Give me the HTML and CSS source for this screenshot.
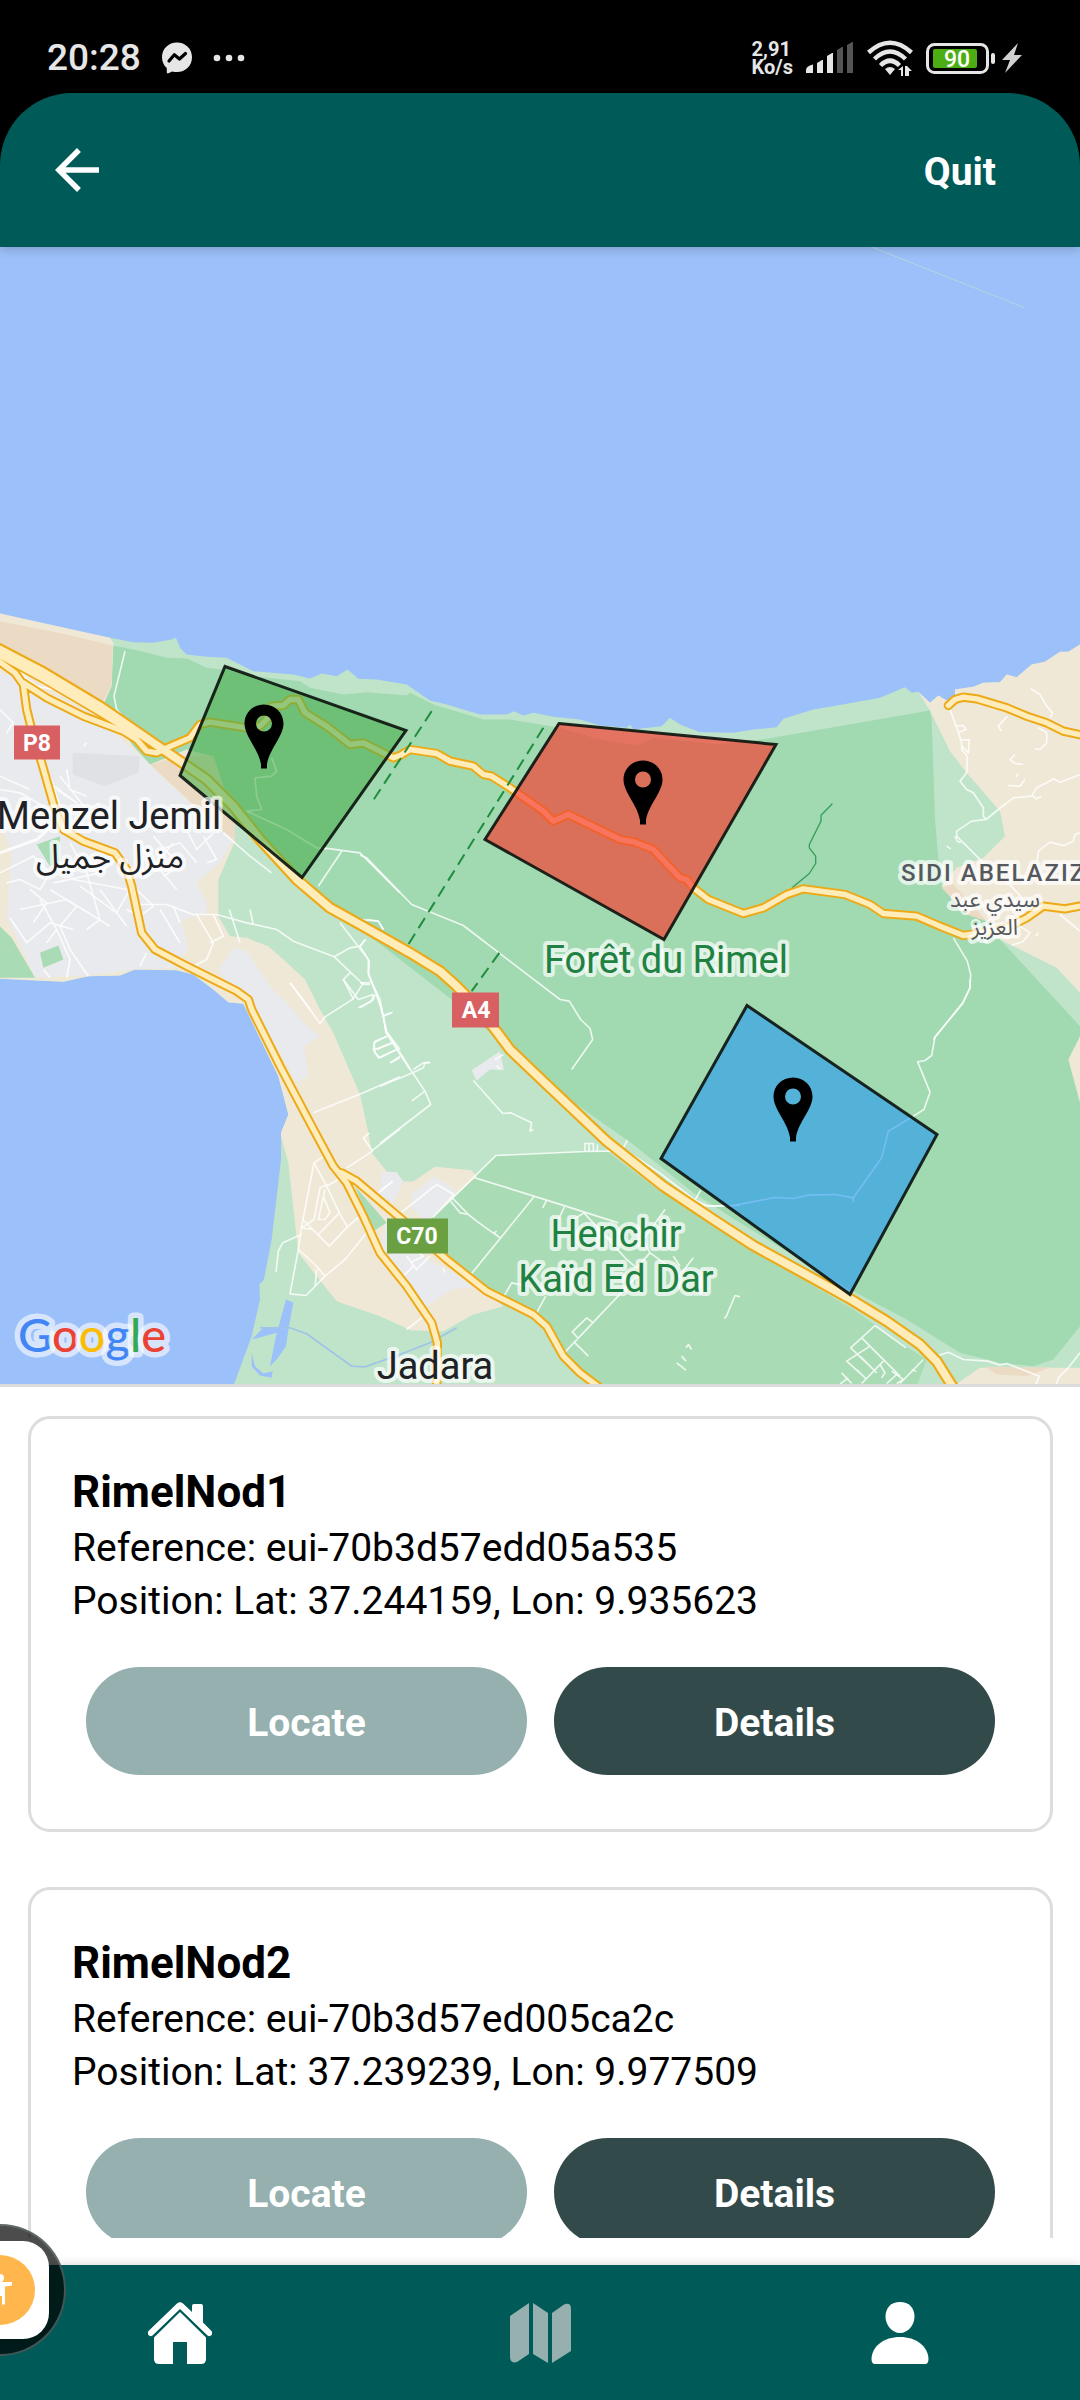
FILE: index.html
```
<!DOCTYPE html>
<html lang="en">
<head>
<meta charset="utf-8">
<meta name="viewport" content="width=device-width, initial-scale=1">
<title>Rimel nodes</title>
<link rel="stylesheet" href="styles.css">
</head>
<body>
<div class="status-bar">
  <div class="status-group">
    <span class="clock">20:28</span>
    <svg class="icon-messenger" viewBox="0 0 32 32" aria-hidden="true">
      <path fill="#e6e6e6" d="M16 0.500C7.500 0.500 1 6.700 1 15.200c0 4.400 1.800 8.200 4.800 10.900v4.200c0 1 .8 1.400 1.600 1l3.800-1.900c1.500.4 3.100.6 4.800.6 8.500 0 15-6.300 15-14.800S24.500.5 16 .5z"/>
      <path fill="none" stroke="#000" stroke-width="3.200" stroke-linejoin="round" stroke-linecap="round" d="M8 19l5.300-6.300 5.200 4.300 6-5.500"/>
    </svg>
    <svg class="icon-dots" viewBox="0 0 32 8" aria-hidden="true"><g fill="#e6e6e6"><circle cx="4" cy="4" r="3.300"/><circle cx="16" cy="4" r="3.300"/><circle cx="28" cy="4" r="3.300"/></g></svg>
  </div>
  <div class="status-group status-right">
    <span class="speed">2,91<br>Ko/s</span>
    <svg class="icon-signal" viewBox="0 0 48 32" aria-hidden="true">
      <path fill="#e6e6e6" d="M0 31v-3q0-4 7-5.500v8.500zM11 31V21l5-3h1v13zM21 31V14l5-3h1v20z"/>
      <path fill="#555" d="M31 31V8l5-3h1v26zM41 31V3l5-3h1v31z"/>
    </svg>
    <svg class="icon-wifi" viewBox="0 0 46 36" aria-hidden="true">
      <g fill="none" stroke="#e6e6e6" stroke-width="4.500">
        <path d="M1.500 12.500Q23-7 44.500 12.500"/><path d="M7.500 19Q23 4 38.500 19"/><path d="M13.500 25.500Q23 16 32.500 25.500"/>
      </g>
      <path fill="#e6e6e6" d="M18 29q5-4 10 0l-5 6zM31 30l5-4v10h-2v-6zM38 26h2l5 5h-3v5h-4z"/>
    </svg>
    <svg class="icon-battery" viewBox="0 0 96 32" aria-hidden="true">
      <rect x="1.500" y="2.500" width="60" height="28" rx="7" fill="none" stroke="#e6e6e6" stroke-width="3"/>
      <rect x="7" y="7" width="44" height="19" rx="2" fill="#4cae14"/>
      <rect x="65" y="11" width="4" height="11" rx="2" fill="#e6e6e6"/>
      <text x="31" y="25" text-anchor="middle">90</text>
      <path fill="#d0d0d0" d="M92 1L76 18h8L79 31 96 13h-8z"/>
    </svg>
  </div>
</div>

<div class="app">
  <header class="header">
    <button class="back" type="button" aria-label="Back">
      <svg viewBox="0 0 24 24" aria-hidden="true"><path fill="#fff" d="M20 11H7.830l5.590-5.590L12 4l-8 8 8 8 1.410-1.410L7.830 13H20z"/></svg>
    </button>
    <button class="quit" type="button">Quit</button>
  </header>

  <main class="content">
    <section class="map" aria-label="Map">
      <svg class="map-canvas" viewBox="0 247 1080 1138" preserveAspectRatio="xMidYMid slice">
        <defs>
          <path id="minor-roads" stroke-linecap="round" d="M1025 3520L1070 3545 1200 3655 1340 3780 1460 3875 1600 3945 1640 3980 1690 4070 1740 4120 1800 4165M-10 1980L45 2020 70 2055 80 2130 100 2210 125 2290 165 2430 190 2490 250 2525 345 2560 380 2610 395 2660 425 2800 465 2850 560 2900 640 2940 710 2975 745 3000 755 3030 840 3200 930 3370 1000 3500 1040 3550 1090 3650 1140 3760 1220 3860 1295 3970 1312 4030 1310 4165M70 2050L140 2095 250 2150 370 2195 410 2220 440 2255 470 2260 500 2245 570 2215 600 2175 630 2168 740 2185 780 2180 800 2160 815 2120 850 2118 870 2100 895 2100 915 2140 980 2180 1050 2235 1090 2230 1180 2275 1200 2268 1230 2250 1310 2262 1350 2285 1420 2300 1450 2325 1475 2330 1530 2365 1630 2435 1660 2465 1705 2445 1860 2520 1905 2528 1960 2550 2040 2635 2060 2640 2080 2665 2125 2700 2230 2742 2290 2725 2360 2685 2410 2668 2535 2685 2610 2715 2650 2742 2750 2750 2820 2780 2890 2808 3010 2790 3080 2755 3130 2720 3195 2728 3250 2718M2845 2118L2865 2100 2890 2093 2930 2098 3020 2125 3080 2150 3140 2170 3190 2195 3250 2208"/>
          <path id="highway" d="M-10 1945L130 2018 300 2120 540 2285 620 2340 700 2420 780 2520 890 2640 990 2725 1080 2775 1230 2860 1320 2915 1370 2960 1440 3030 1530 3150 1640 3255 1820 3425 1990 3560 2140 3660 2260 3738 2400 3815 2550 3898 2660 3965 2760 4035 2810 4085 2860 4165"/>
          <path id="highway-ramp" d="M-10 1962L130 2038 300 2138 420 2212"/>
          <path id="pin" fill-rule="evenodd" d="M0 0C11 0 19.500 8.500 19.500 19 19.500 32 5 45 3 60V64H-3V60C-5 45-19.500 32-19.500 19-19.500 8.500-11 0 0 0zM0 11A8 8 0 1 0 0 27 8 8 0 1 0 0 11z"/>
        </defs>

        <rect x="-1000" y="0" width="3080" height="2400" fill="#9cc0f9"/>
        <path d="M868 246L1024 308" stroke="#b4d6dd" fill="none"/>

        <!-- land, drawn on a grid three times finer than the screen -->
        <g transform="scale(.333333)">
          <path fill="#bfe4ca" d="M0 1842L110 1870 215 1895 330 1915 400 1928 460 1930 515 1920 528 1915 540 1945 560 1965 620 1972 680 1975 760 2015 880 2025 930 2037 965 2022 1010 2030 1043 2010 1075 2038 1130 2040 1220 2055 1290 2103 1340 2115 1440 2145 1520 2145 1542 2135 1570 2148 1600 2140 1660 2152 1740 2160 1800 2178 1880 2185 1890 2175 1900 2190 1985 2180 2010 2155 2040 2175 2100 2198 2200 2200 2260 2190 2330 2183 2350 2158 2440 2130 2490 2122 2640 2095 2715 2063 2735 2080 2755 2077 2790 2110 2815 2088 2840 2103 2865 2095 2865 2070 2920 2062 2950 2050 3000 2048 3020 2025 3050 2033 3095 1995 3135 1987 3180 1957 3205 1957 3240 1935V4160H700L755 4010 780 3900 778 3855 792 3840 815 3720 835 3550 843 3480 843 3400 865 3345 835 3230 730 3013 685 3008 640 2970 580 2925 530 2912 405 2910 360 2928 265 2930 190 2947 0 2938z"/>
          <path fill="#a1d9b0" d="M338 1938L400 1950 500 1975 560 1977 620 2005 680 2012 760 2030 900 2045 930 2065 1030 2085 1100 2078 1220 2088 1230 2080 1300 2115 1450 2160 1530 2160 1680 2185 1780 2215 1910 2238 1960 2215 2160 2235 2300 2218 2790 2133 2795 2160 2805 2460 2815 2580 2825 2660 2900 2730 2960 2765 3000 2820 3240 3080V3980L3160 4080 3100 4100 3000 4090 2880 4060 2720 3960 2550 3870 2220 3670 2080 3580 1900 3435 1680 3280 1355 3000 1155 2845 870 2630 790 2520 700 2460 640 2270 540 2270 450 2295 400 2240 310 2115 335 2055z"/>
          <path fill="#a9dbb5" d="M1490 3468L1820 3455 1960 3560 2220 3730 2560 3930 2700 4030 2780 4080 2750 4160H1810L1700 4070 1620 3945 1450 3870 1300 3755 1290 3660 1425 3530z"/>
          <path fill="#efe8d7" d="M0 1842L330 1915 340 1930 335 2060 310 2115 400 2240 450 2295 560 2250 640 2270 660 2330 705 2470 703 2530 655 2640 655 2750 690 2810 740 2815 805 2840 850 2880 915 2940 960 3030 1000 3100 1080 3285 1105 3400 1115 3460 1160 3515 1210 3546 1240 3546 1305 3502 1415 3512 1430 3530 1290 3660 1300 3755 1510 3920 1420 3945 1330 3995 1235 3993 1140 3950 1010 3905 950 3830 895 3760 865 3490 843 3410 843 3400 865 3345 835 3230 730 3013 685 3008 640 2970 580 2925 530 2912 405 2910 360 2928 265 2930 190 2947 0 2938z"/>
          <path fill="#efe8d7" d="M2755 2077L2790 2133 2850 2255 2900 2320 2965 2395 3000 2435 3015 2510 2950 2575 2870 2605 2825 2660 2900 2730 2960 2765 3000 2820 3080 2860 3170 2905 3240 2980V1935L3205 1957 3180 1957 3135 1987 3095 1995 3050 2033 3020 2025 3000 2048 2950 2050 2920 2062 2865 2070 2865 2095 2840 2103 2815 2088 2790 2110zM2860 4160L2940 4105H3240V4160zM3240 3110L3205 3180 3240 3310z"/>
          <path fill="#ebdbc4" d="M0 1865L200 1905 338 1938 335 2055 300 2125 0 1960zM540 2270L640 2270 660 2330 705 2470V2530L450 2295zM285 2120L325 2170 290 2160zM2825 2665L2860 2655 2960 2765 2900 2745zM2955 4102L3150 4104 3080 4130 2990 4125z"/>
          <path fill="#e8eaed" d="M0 2020L60 2035 290 2160 370 2225 450 2295 590 2430 700 2520 660 2590 590 2650 620 2710 620 2740 545 2762 565 2850 520 2905 405 2910 265 2928 105 2935 20 2750 35 2560 0 2460zM700 2845L740 2855 790 2930 810 2960 870 3020 910 3070 960 3110 912 3140 925 3230 890 3250 760 3020 680 2950 655 2910zM1235 3585L1305 3530 1370 3575 1280 3670 1235 3625zM1145 3515L1190 3518 1210 3545 1180 3610 1140 3590zM1160 3650L1280 3780 1360 3820 1420 3865 1360 3868 1280 3920 1140 3760zM1415 3212L1500 3155 1512 3212 1470 3210 1430 3243z"/>
          <path fill="#dfe1e5" d="M218 2260L420 2270 415 2320 315 2360 218 2325z"/>
          <path fill="#a9dbb5" d="M0 2780L35 2815 105 2935H0zM120 2860L175 2838 190 2880 130 2905zM110 2535L180 2510 178 2590 150 2600zM1065 3560L1160 3670 1120 3695z"/>
          <path fill="#9cc0f9" d="M858 3900L880 3910 866 3985 858 4040 830 4080 810 4100 830 4000 755 4020 790 3985 835 3985zM755 4060L765 4100 790 4122 818 4115 815 4135 780 4128 755 4100z"/>
          <path fill="none" stroke="#a0c3e8" stroke-width="5" d="M780 3985L870 3985 920 4003 1055 4100 1095 4102 1200 4065 1290 4030 1370 3985"/>
        </g>

        <g class="streets">
          <g transform="translate(0 590) scale(.333333)">
            <path d="M375 185L342 320 350 360 380 395M670 730L750 800 815 850M970 775L1080 790 1200 910M1025 785L955 890M400 945L500 945 580 975 650 975 740 1000 830 1020 880 1055 1003 1102 1050 1075 1080 1070 1098 1050M1020 1000L1105 1110 1105 1150 1145 1260M1003 1102L1090 1185 1110 1185M1100 990L1135 995 1150 1020M688 960L720 1060M750 960L760 1005M1050 1150L1030 1170 1075 1230 1120 1215M870 1180L930 1260"/>
            <path stroke-width="9" d="M0 790L110 750 150 715"/>
            <path d="M0 360L40 400 20 430M0 600L60 610 130 650 160 680M0 850L100 800 150 850 120 900 60 870 20 880M200 540L210 600 260 620M180 560L260 660 300 640M150 580L230 640 170 600M210 760L260 850 300 990 260 1020M220 870L380 900 410 930M160 880L300 850 360 800M380 830L410 900 460 950 420 980 380 960M300 900L380 1010M150 900L230 950 180 1010 210 1080 265 1160M30 985L80 1060 150 1000 220 1020M60 960L200 930 330 1010M120 930L170 1020 140 1060M240 890L350 970 400 880M90 900L140 940 100 1000M460 740L540 830 490 860M480 780L540 760 590 820M430 780L530 900M560 720L590 780 640 730M610 740L650 810 620 820M520 760L440 860M480 960L540 1060M520 950L540 1000M590 975L640 1060 620 1110 580 1130M640 975L670 1040 630 1060M440 1090L420 1130M130 1140L150 1165M170 1020L210 1110 200 1165M60 250L110 290 160 300M150 560L180 650M90 600L0 560M260 460L250 470"/>
            <path d="M815 505L830 545 815 560 765 565 770 620 785 660 740 665 860 720 950 775 980 778"/>
          </g>
          <g transform="translate(360 650) scale(.333333)">
            <path d="M0 617L20 625 155 765 310 828 600 1050 628 1055 662 1110 690 1137 698 1170 635 1260M0 810L55 815 70 840M15 870L0 890 28 935 25 975 50 1030 70 1100 78 1150 150 1260M0 1000L30 1000M0 1075L40 1050 45 1035M70 1100L95 1090M80 1160L42 1180 45 1210 60 1225 110 1200M45 1200L95 1180M120 1220L90 1240M210 1240L190 1240 160 1260"/>
          </g>
          <g transform="translate(720 620) scale(.333333)">
            <path d="M690 270L712 330 725 370 725 390 742 410 740 460 720 485 740 510 760 520 790 565 790 590 798 600 755 605 710 635 710 650 800 740M798 600L835 570 880 535 935 530 950 505 980 490 1000 478 1020 488 1080 465M710 320L730 318 738 330 712 340M725 362L748 360 745 400 725 380M932 208L960 225 980 260 998 280 990 295M862 290L835 320 845 335M955 325L980 340 980 370 960 390 945 388M885 405L870 420 885 432 910 435M895 462L888 472M915 480L900 500 865 498M935 525L948 538 965 530M1080 640L1065 645 1060 665 1030 678 990 668 955 695 950 740M680 680L692 688M705 650L712 665 722 670M860 785L920 850M1020 885L1080 935M900 920L930 940 910 965 875 978M955 940L948 950M700 955L742 1025 752 1065 750 1105 728 1150 640 1260"/>
          </g>
          <g transform="translate(0 980) scale(.333333)">
            <path d="M870 10L905 55 960 132 975 112 1060 58 1030 0M1075 85L1115 65 1120 45M1060 58L1090 10M1110 0L1140 60 1158 155 1200 210M1150 108L1178 98M1162 170L1125 185 1120 210 1135 235 1190 210M1130 210L1180 190M1172 250L1200 235M940 400L1078 345 1200 292M1108 460L1090 475 1118 515 1040 565M1118 512L1200 448M972 530L942 550 905 740 895 810 870 943 918 948 975 890 1035 840 1100 760M942 550L980 620 1018 700 1042 742 1080 710M1042 742L988 800 908 720M1018 700L955 765M980 620L1015 600M985 615L960 625 942 720 905 745M970 650L990 700 975 720 955 720 975 630M905 745L940 750M905 765L848 790 835 815 828 878M895 810L945 855 975 890M950 870L945 920M1135 640L1178 605"/>
          </g>
          <g transform="translate(380 980) scale(.333333)">
            <path d="M0 70L20 155 98 280 135 335 152 375 0 492M0 320L98 280 130 265 135 250 150 248M135 335L95 365M280 303L368 402 392 400 455 430 450 455 460 450M65 698L170 615 222 645 160 712 348 528 615 516 740 514 845 585 945 662 985 680 1080 678M615 516V492H640V516M627 492V516M652 495V516M730 505L742 482M945 662L962 632M285 595L500 662 715 730M462 652L270 888M500 662L488 685M553 683L535 720M612 700L580 720M217 655L265 705 240 700 212 665M265 705L290 725 360 775 342 760 350 755M612 700L740 840 770 865 810 820 880 870M665 745L700 740M855 690L790 780 810 820M680 770L720 800M880 830L900 860M940 835L905 880M790 870L555 1118M640 1030L620 1015 577 1057 595 1077M585 1090L625 1130M372 950L395 910 440 920M470 1000L497 950M1033 1018L1040 1008 1065 948 1080 952M935 1110L925 1095 918 1105M905 1130L918 1145M890 1150L918 1172M80 1050L125 1015M60 900L100 860M80 830L110 870 150 830M90 850L130 830 100 810M195 880L190 865M0 635L38 605M345 240L370 225M350 260L362 268"/>
          </g>
          <g transform="translate(700 980) scale(.333333)">
            <path d="M810 0V25L788 72 705 172 695 228 675 243 653 247 690 338 672 390 640 410M0 678L90 680M525 1038L618 1105M525 1038L452 1105 520 1170M485 1075L600 1190M510 1100L440 1145 490 1190M550 1145L485 1212M480 1130L530 1180M470 1170L500 1200M425 1180L455 1212M540 1155L555 1180 545 1195M575 1175L610 1200 590 1212M560 1212L590 1185M600 1212L670 1140M420 1214L445 1195M715 1128L745 1118 790 1140 865 1145 900 1157 920 1152 1018 1190 1008 1214M1140 1120L1105 1165 1075 1195 1070 1214M635 1170L648 1175"/>
            <path d="M640 410L565 455 545 535 460 655 405 645 325 647 280 657 225 654 90 680M460 655V670"/>
          </g>
        </g>

        <g transform="scale(.333333)" fill="none" stroke-linejoin="round">
          <path stroke="#34a05a" stroke-width="4" d="M2376 2665L2428 2622 2447 2592V2570L2428 2545V2535L2463 2465V2447L2497 2413"/>
          <g class="road-casing">
            <use href="#minor-roads" stroke-width="28"/>
            <use href="#highway-ramp" stroke-width="28"/>
            <use href="#highway" stroke-width="36"/>
          </g>
          <g class="road-fill">
            <use href="#minor-roads" stroke-width="16"/>
            <use href="#highway-ramp" stroke-width="18"/>
            <use href="#highway" stroke-width="23"/>
          </g>
          <path stroke="#1e8e3e" stroke-width="6" stroke-dasharray="36 20" d="M1295 2135L1118 2405M1630 2185L1225 2835M1498 2860L1415 2975"/>
        </g>

        <g class="plots">
          <path fill="#4caf50" fill-opacity=".6" d="M225 667L406 731 302 878 180 776z"/>
          <path fill="#f44336" fill-opacity=".7" d="M559 724L776 745 664 940 485 840z"/>
          <path fill="#2196f3" fill-opacity=".6" d="M747 1006L937 1135 850 1295 661 1159z"/>
        </g>

        <g class="shields">
          <rect x="14" y="726" width="46" height="34" fill="#d96062"/><text x="37" y="751">P8</text>
          <rect x="452" y="993" width="47" height="35" fill="#d96062"/><text x="476" y="1018">A4</text>
          <rect x="387" y="1219" width="61" height="35" fill="#6a9f42"/><text x="417" y="1244">C70</text>
        </g>

        <g class="labels">
          <g class="town">
            <text x="109" y="829">Menzel Jemil</text>
            <text class="arabic" x="110" y="868">منزل جميل</text>
            <text x="435" y="1379">Jadara</text>
          </g>
          <g class="forest">
            <text x="666" y="973">Forêt du Rimel</text>
            <text x="616" y="1247">Henchir</text>
            <text x="616" y="1292">Kaïd Ed Dar</text>
          </g>
          <g class="district">
            <text class="latin" x="901" y="881">SIDI ABELAZIZ</text>
            <text class="arabic-small" x="995" y="907">سيدي عبد</text>
            <text class="arabic-small" x="995" y="935">العزيز</text>
          </g>
          <text class="logo" x="18" y="1352"><tspan fill="#4285f4">G</tspan><tspan fill="#ea4335">o</tspan><tspan fill="#fbbc05">o</tspan><tspan fill="#4285f4">g</tspan><tspan fill="#34a853">l</tspan><tspan fill="#ea4335">e</tspan></text>
        </g>

        <use href="#pin" x="264" y="705"/>
        <use href="#pin" x="643" y="761"/>
        <use href="#pin" x="793" y="1078"/>
      </svg>
    </section>

    <section class="nodes" aria-label="Nodes">
      <article class="card">
        <h2>RimelNod1</h2>
        <p>Reference: eui-70b3d57edd05a535</p>
        <p>Position: Lat: 37.244159, Lon: 9.935623</p>
        <div class="actions">
          <button class="locate" type="button">Locate</button>
          <button class="details" type="button">Details</button>
        </div>
      </article>
      <article class="card">
        <h2>RimelNod2</h2>
        <p>Reference: eui-70b3d57ed005ca2c</p>
        <p>Position: Lat: 37.239239, Lon: 9.977509</p>
        <div class="actions">
          <button class="locate" type="button">Locate</button>
          <button class="details" type="button">Details</button>
        </div>
      </article>
    </section>
  </main>

  <nav class="tabs" aria-label="Main">
    <a href="#home" aria-label="Home">
      <svg viewBox="0 0 64 62" aria-hidden="true"><g fill="#fff"><path d="M29 1.500Q32-1 35 1.500L44 10V4q0-2 2-2h7q2 0 2 2V20.500L63.500 29q1.500 2 0 4t-4 .5L32 7 4.500 33.500q-2.500 1.500-4-.5t0-4z"/><path d="M32 10L58 35.500V57q0 5-5 5H39V40H25V62H11q-5 0-5-5V35.500z"/></g></svg>
    </a>
    <a href="#map" aria-label="Map" aria-current="page">
      <svg viewBox="0 0 64 62" aria-hidden="true"><g fill="#95b0ae"><path d="M2 14L21 1V52L9 60Q2 62 2 55z"/><path d="M25 1L40 11V61L25 52z"/><path d="M44 11L56 2.500Q63 0 63 7V49L44 61z"/></g></svg>
    </a>
    <a href="#profile" aria-label="Profile">
      <svg viewBox="0 0 64 62" aria-hidden="true"><g fill="#fff"><path d="M32 0C41 0 46.500 6 46.500 14.500S40 31 32 31 17.500 23 17.500 14.500 23 0 32 0z"/><path d="M7 62Q3.500 62 3.500 57C4 44 16 35 32 35S60 44 60.500 57Q60.500 62 57 62z"/></g></svg>
    </a>
  </nav>
</div>

<button class="assist" type="button" aria-label="Accessibility">
  <svg viewBox="0 0 70 70" aria-hidden="true"><circle cx="35" cy="35" r="35" fill="#ffb74d"/><g fill="#fff"><circle cx="35" cy="23" r="4"/><path d="M23 27H47V30.500L40 31.500V49.500H37V41H33V49.500H30V31.500L23 30.500z"/></g></svg>
</button>
</body>
</html>
```
FILE: styles.css
```
* { box-sizing: border-box; }

body {
  margin: 0;
  height: 100vh;
  display: flex;
  flex-direction: column;
  position: relative;
  overflow: hidden;
  background: #000;
  color: #000;
  font-family: Roboto, "Noto Sans", sans-serif;
}

button {
  border: 0;
  padding: 4px 0 0;
  background: none;
  color: #fff;
  font: bold 39px/1 Roboto, "Noto Sans", sans-serif;
}

/* Status bar */
.status-bar {
  flex: none;
  height: 93px;
  padding: 22px 58px 0 47px;
  display: flex;
  justify-content: space-between;
  align-items: center;
  color: #e6e6e6;
}
.status-group { display: flex; align-items: center; gap: 20px; }
.status-right { gap: 13px; }
.clock { font-size: 37px; font-weight: 500; line-height: 44px; }
.speed { font-size: 20px; font-weight: 700; line-height: 18px; }
.status-bar svg { display: block; }
.icon-messenger { width: 32px; height: 32px; }
.icon-dots { width: 32px; height: 8px; }
.icon-signal { width: 48px; height: 32px; }
.icon-wifi { width: 46px; height: 36px; }
.icon-battery { width: 96px; height: 32px; }
.icon-battery text { font-size: 23px; font-weight: 500; fill: #fff; }

/* App frame */
.app {
  flex: 1;
  min-height: 0;
  display: flex;
  flex-direction: column;
  border-radius: 72px 72px 0 0;
  overflow: hidden;
}
.header {
  flex: none;
  height: 154px;
  padding: 0 84px 0 44px;
  display: flex;
  justify-content: space-between;
  align-items: center;
  background: #005b58;
  box-shadow: 0 2px 10px rgba(0, 0, 0, .2);
  z-index: 1;
}
.back { width: 66px; height: 66px; padding: 0; }
.back svg { display: block; width: 66px; height: 66px; }
.content {
  flex: 1;
  min-height: 0;
  display: grid;
  grid-template-rows: minmax(0, 1140fr) minmax(0, 851fr);
  padding-bottom: 27px;
  background: #fff;
}

/* Map */
.map {
  border-bottom: 3px solid #dcdcdc;
  overflow: hidden;
}
.map-canvas { display: block; width: 100%; height: 100%; }
.streets { fill: none; stroke: #fff; stroke-opacity: .8; stroke-width: 5; stroke-linejoin: round; }
.road-casing { stroke: #edaa18; }
.road-fill { stroke: #ffecbb; }
.plots { stroke: #0b120d; stroke-width: 3; stroke-opacity: .9; }
.shields text { font-size: 23px; font-weight: 700; fill: #fff; text-anchor: middle; }
.labels text { paint-order: stroke; stroke-linejoin: round; stroke: #fff; stroke-opacity: .7; stroke-width: 8; }
.town, .forest { font-size: 38px; text-anchor: middle; }
.town { fill: #202124; }
.forest { fill: #1f8142; }
.arabic, .arabic-small { font-family: "Noto Sans Arabic", "DejaVu Sans", sans-serif; text-anchor: middle; }
.arabic { font-size: 33px; }
.arabic-small { font-size: 22px; }
.district { fill: #55595e; }
.latin { font-size: 24px; font-weight: 500; letter-spacing: 2px; }
.labels .logo { font: 500 47px Lato, sans-serif; stroke-width: 11; stroke-opacity: .6; }

/* Node list */
.nodes {
  padding: 29px 27px 0 28px;
  display: flex;
  flex-direction: column;
  gap: 55px;
  overflow-y: auto;
  scrollbar-width: none;
}
.card {
  flex: none;
  padding: 46px 41px 54px;
  border: 3px solid #ddd;
  border-radius: 22px;
}
.card h2 { margin: 0 0 3px; font-size: 44px; line-height: 54px; }
.card p { margin: 0; font-size: 39px; line-height: 53px; }
.actions { display: flex; gap: 27px; padding: 39px 14px 0; }
.actions button { flex: 1; height: 108px; border-radius: 54px; }
.locate { background: #95b0ae; }
.details { background: #334a4a; }

/* Bottom tabs */
.tabs {
  flex: none;
  height: 135px;
  display: grid;
  grid-template-columns: repeat(3, 1fr);
  place-items: center;
  background: #005b58;
  box-shadow: 0 -2px 8px rgba(0, 0, 0, .12);
}
.tabs svg { display: block; width: 64px; height: 62px; }

/* Floating shortcut docked to the screen edge */
.assist {
  position: absolute;
  left: -66px;
  bottom: 44px;
  width: 132px;
  height: 132px;
  padding: 0;
  display: grid;
  place-items: center;
  border: 2px solid rgba(110, 125, 125, .6);
  border-radius: 50%;
  background: rgba(0, 0, 0, .7);
}
.assist::before {
  content: "";
  grid-area: 1 / 1;
  width: 98px;
  height: 98px;
  border-radius: 26px;
  background: #fff;
}
.assist svg { grid-area: 1 / 1; width: 70px; height: 70px; z-index: 1; }
```
